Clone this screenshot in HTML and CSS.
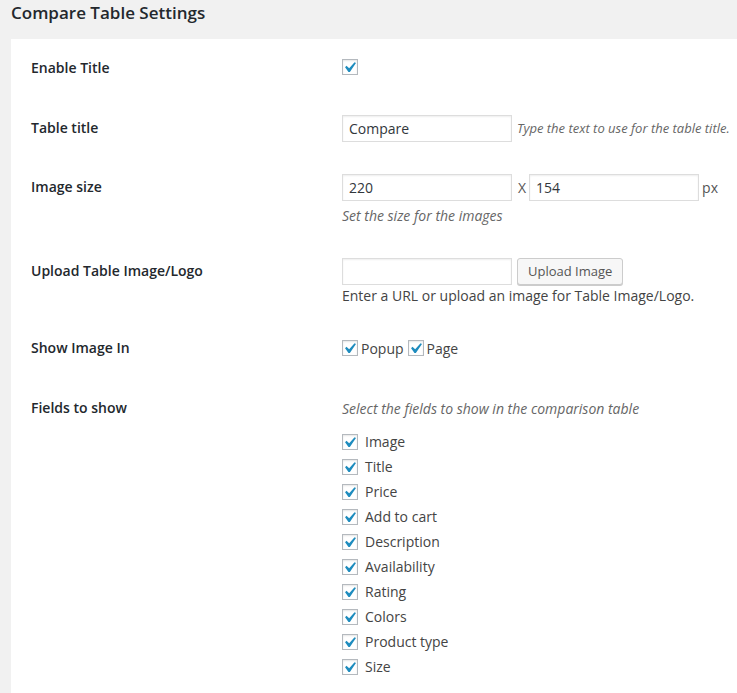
FILE: index.html
```html
<!DOCTYPE html>
<html>
<head>
<meta charset="utf-8">
<link rel="stylesheet" href="styles.css">
</head>
<body>
<h3 class="page-title">Compare Table Settings</h3>
<div class="panel">
  <div class="row r1">
    <div class="label">Enable Title</div>
    <div class="field"><div class="line"><span class="cb"><svg viewBox="0 0 20 20"><path d="M14.83 4.89l1.34.94-5.81 8.38H9.02L5.78 9.67l1.34-1.25 2.57 2.4z"/></svg></span></div></div>
  </div>
  <div class="row r2">
    <div class="label">Table title</div>
    <div class="field"><div class="line"><span class="input">Compare</span><span class="desc inline">Type the text to use for the table title.</span></div></div>
  </div>
  <div class="row r3">
    <div class="label">Image size</div>
    <div class="field">
      <div class="line"><span class="input">220</span><span class="x">X</span><span class="input">154</span><span class="px">px</span></div>
      <div class="desc below">Set the size for the images</div>
    </div>
  </div>
  <div class="row r4">
    <div class="label">Upload Table Image/Logo</div>
    <div class="field">
      <div class="line"><span class="input"></span><span class="button">Upload Image</span></div>
      <div class="note">Enter a URL or upload an image for Table Image/Logo.</div>
    </div>
  </div>
  <div class="row r5">
    <div class="label">Show Image In</div>
    <div class="field"><div class="line">
      <span class="cb"><svg viewBox="0 0 20 20"><path d="M14.83 4.89l1.34.94-5.81 8.38H9.02L5.78 9.67l1.34-1.25 2.57 2.4z"/></svg></span><span class="opt">Popup</span>
      <span class="cb"><svg viewBox="0 0 20 20"><path d="M14.83 4.89l1.34.94-5.81 8.38H9.02L5.78 9.67l1.34-1.25 2.57 2.4z"/></svg></span><span class="opt">Page</span>
    </div></div>
  </div>
  <div class="row r6">
    <div class="label">Fields to show</div>
    <div class="field">
      <div class="line"><span class="desc big">Select the fields to show in the comparison table</span></div>
      <ul class="list">
        <li><span class="cb"><svg viewBox="0 0 20 20"><path d="M14.83 4.89l1.34.94-5.81 8.38H9.02L5.78 9.67l1.34-1.25 2.57 2.4z"/></svg></span>Image</li>
        <li><span class="cb"><svg viewBox="0 0 20 20"><path d="M14.83 4.89l1.34.94-5.81 8.38H9.02L5.78 9.67l1.34-1.25 2.57 2.4z"/></svg></span>Title</li>
        <li><span class="cb"><svg viewBox="0 0 20 20"><path d="M14.83 4.89l1.34.94-5.81 8.38H9.02L5.78 9.67l1.34-1.25 2.57 2.4z"/></svg></span>Price</li>
        <li><span class="cb"><svg viewBox="0 0 20 20"><path d="M14.83 4.89l1.34.94-5.81 8.38H9.02L5.78 9.67l1.34-1.25 2.57 2.4z"/></svg></span>Add to cart</li>
        <li><span class="cb"><svg viewBox="0 0 20 20"><path d="M14.83 4.89l1.34.94-5.81 8.38H9.02L5.78 9.67l1.34-1.25 2.57 2.4z"/></svg></span>Description</li>
        <li><span class="cb"><svg viewBox="0 0 20 20"><path d="M14.83 4.89l1.34.94-5.81 8.38H9.02L5.78 9.67l1.34-1.25 2.57 2.4z"/></svg></span>Availability</li>
        <li><span class="cb"><svg viewBox="0 0 20 20"><path d="M14.83 4.89l1.34.94-5.81 8.38H9.02L5.78 9.67l1.34-1.25 2.57 2.4z"/></svg></span>Rating</li>
        <li><span class="cb"><svg viewBox="0 0 20 20"><path d="M14.83 4.89l1.34.94-5.81 8.38H9.02L5.78 9.67l1.34-1.25 2.57 2.4z"/></svg></span>Colors</li>
        <li><span class="cb"><svg viewBox="0 0 20 20"><path d="M14.83 4.89l1.34.94-5.81 8.38H9.02L5.78 9.67l1.34-1.25 2.57 2.4z"/></svg></span>Product type</li>
        <li><span class="cb"><svg viewBox="0 0 20 20"><path d="M14.83 4.89l1.34.94-5.81 8.38H9.02L5.78 9.67l1.34-1.25 2.57 2.4z"/></svg></span>Size</li>
      </ul>
    </div>
  </div>
</div>
</body>
</html>
```
FILE: styles.css
```css
html, body {
  margin: 0;
  padding: 0;
  background: #f1f1f1;
  font-family: "Open Sans", "Liberation Sans", sans-serif;
  color: #444;
  font-size: 14px;
}
.page-title {
  margin: 0;
  padding: 0 0 0 11px;
  height: 39px;
  line-height: 26px;
  font-size: 17px;
  font-weight: 600;
  color: #23282d;
}
.panel {
  margin-left: 11px;
  background: #fff;
  padding: 15px 0 30px 20px;
  min-height: 620px;
}
.row {
  display: grid;
  grid-template-columns: 311px 1fr;
  align-items: start;
}
.label {
  font-weight: 600;
  color: #23282d;
  line-height: 28px;
}
.line {
  display: flex;
  align-items: center;
  height: 28px;
}
.r2 { margin-top: 32px; }
.r3 { margin-top: 31px; }
.r4 { margin-top: 32px; }
.r5 { margin-top: 29px; }
.r6 { margin-top: 32px; }
.r1 .line { margin-top: -1px; }
.cb {
  position: relative;
  display: inline-block;
  box-sizing: border-box;
  width: 16px;
  height: 16px;
  border: 1px solid #b4b9be;
  background: #fff;
  box-shadow: inset 0 1px 2px rgba(0,0,0,0.1);
  flex: none;
}
.cb svg {
  position: absolute;
  left: -4px;
  top: -3px;
  width: 21px;
  height: 21px;
  fill: #1e8cbe;
}
.input {
  box-sizing: border-box;
  display: inline-block;
  width: 170px;
  height: 27px;
  border: 1px solid #ddd;
  box-shadow: inset 0 1px 2px rgba(0,0,0,0.07);
  padding: 0 6px;
  line-height: 25px;
  color: #32373c;
  font-size: 14px;
}
.desc {
  font-style: italic;
  font-size: 13px;
  color: #666;
}
.desc.big { font-size: 14px; }
.desc.inline { margin-left: 5px; }
.desc.below { font-size: 14px; line-height: 19px; margin-top: 5px; }
.x { margin: 0 3px 0 6px; color: #555; }
.px { margin-left: 3px; color: #555; }
.button {
  box-sizing: border-box;
  display: inline-block;
  margin-left: 5px;
  height: 27px;
  padding: 0 10px;
  line-height: 25px;
  font-size: 13px;
  color: #555;
  background: #f7f7f7;
  border: 1px solid #ccc;
  border-radius: 3px;
  box-shadow: 0 1px 0 #ccc;
}
.note { line-height: 19px; margin-top: 1px; color: #444; }
.opt { margin: 0 4px 0 3px; color: #444; }
.list {
  list-style: none;
  margin: 7px 0 0;
  padding: 0;
}
.list li {
  display: flex;
  align-items: center;
  height: 25px;
  color: #444;
}
.list .cb { margin-right: 7px; }
```
